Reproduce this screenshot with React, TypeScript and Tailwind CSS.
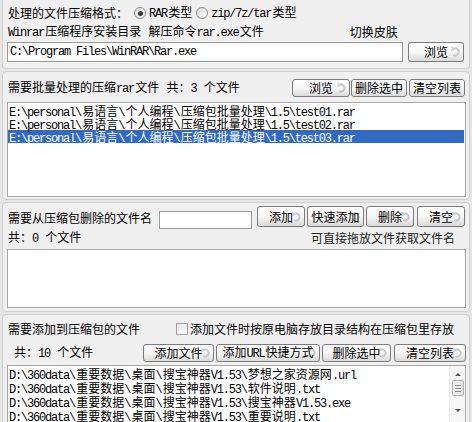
import React from "react";

// split latin runs out so they get the narrow mono look of the original UI font
const T = ({ s }: { s: string }) => (
  <>
    {s
      .split(/([\x20-\x7e]+)/)
      .filter(Boolean)
      .map((p, i) =>
        /^[\x20-\x7e]/.test(p) ? (
          <span key={i} className="font-['Liberation_Mono'] tracking-[-1.2px] pr-[1.2px] whitespace-pre">
            {p}
          </span>
        ) : (
          <span key={i}>{p}</span>
        )
      )}
  </>
);

const Swirl = () => (
  <svg
    className="absolute right-[2px] top-1/2 -translate-y-1/2"
    width="11"
    height="13"
    viewBox="0 0 11 13"
    fill="none"
  >
    <path d="M3 3.5 A3.6 3.6 0 1 1 3.2 9.6" stroke="#c8c8c8" strokeWidth="2" />
    <path d="M1.5 1.5 L4 3.8 L1.2 5" stroke="#d0d0d0" strokeWidth="1.4" />
  </svg>
);

const Btn = ({ label, w }: { label: string; w: string }) => (
  <div
    className={`relative ${w} h-full flex items-center justify-center rounded-[3px] border border-[#7c7c7c] bg-gradient-to-b from-[#ffffff] via-[#f7f7f7] to-[#dadada] text-[12px] leading-none text-black`}
  >
    <span className="relative z-10">
      <T s={label} />
    </span>
    <Swirl />
  </div>
);

const Radio = ({ on }: { on?: boolean }) => (
  <div className="w-[12px] h-[12px] rounded-full border border-[#8c8c8c] bg-gradient-to-br from-[#d8d8d8] to-[#ffffff] flex items-center justify-center">
    {on && <div className="w-[5px] h-[5px] rounded-full bg-[#3a3a3a]" />}
  </div>
);

const Panel = ({ className, children }: { className: string; children: React.ReactNode }) => (
  <div className={`border border-[#cfcfcf] bg-[#f0f0f0] flex flex-col ${className}`}>{children}</div>
);

const rows1 = [
  "E:\\personal\\易语言\\个人编程\\压缩包批量处理\\1.5\\test01.rar",
  "E:\\personal\\易语言\\个人编程\\压缩包批量处理\\1.5\\test02.rar",
  "E:\\personal\\易语言\\个人编程\\压缩包批量处理\\1.5\\test03.rar",
];

const rows4 = [
  "D:\\360data\\重要数据\\桌面\\搜宝神器V1.53\\梦想之家资源网.url",
  "D:\\360data\\重要数据\\桌面\\搜宝神器V1.53\\软件说明.txt",
  "D:\\360data\\重要数据\\桌面\\搜宝神器V1.53\\搜宝神器V1.53.exe",
  "D:\\360data\\重要数据\\桌面\\搜宝神器V1.53\\重要说明.txt",
];

export default function App() {
  return (
    <div className="w-[472px] h-[422px] overflow-hidden bg-[#e6e6e6] px-[2px] flex flex-col gap-[2px] font-['Noto_Sans_CJK_SC',sans-serif] text-[12px] text-black">
      {/* format + rar path */}
      <Panel className="h-[69px] shrink-0 border-t-0 rounded-b-[4px] pl-[5px] pr-[4px]">
        <div className="mt-[5px] h-[16px] flex items-center leading-[14px]">
          <span>处理的文件压缩格式：</span>
          <div className="ml-[6px]">
            <Radio on />
          </div>
          <span className="ml-[3px]">
            <T s="RAR类型" />
          </span>
          <div className="ml-[4px]">
            <Radio />
          </div>
          <span className="ml-[3px]">
            <T s="zip/7z/tar类型" />
          </span>
        </div>
        <div className="mt-[4px] h-[14px] flex items-center leading-[14px]">
          <span>
            <T s="Winrar压缩程序安装目录 解压命令rar.exe文件" />
          </span>
          <span className="ml-[86px]">切换皮肤</span>
        </div>
        <div className="mt-[3px] h-[20px] flex items-center">
          <div className="-ml-[1px] w-[396px] h-[20px] border border-[#9a9a9a] bg-white flex items-center pl-[2px] leading-[14px]">
            <T s="C:\Program Files\WinRAR\Rar.exe" />
          </div>
          <div className="ml-[5px] h-[20px]">
            <Btn label="浏览" w="w-[56px]" />
          </div>
        </div>
      </Panel>

      {/* rar list */}
      <Panel className="h-[129px] shrink-0 rounded-[4px] pl-[4px] pr-[3px]">
        <div className="mt-[7px] h-[18px] flex items-center leading-[14px]">
          <span className="ml-[1px]">
            <T s="需要批量处理的压缩rar文件 共：3 个文件" />
          </span>
          <div className="ml-auto h-full flex mr-[1px]">
            <Btn label="浏览" w="w-[58px]" />
            <div className="ml-[1px] h-full">
              <Btn label="删除选中" w="w-[56px]" />
            </div>
            <div className="ml-[2px] h-full">
              <Btn label="清空列表" w="w-[56px]" />
            </div>
          </div>
        </div>
        <div className="mt-[5px] h-[95px] border border-[#a8a8a8] bg-white pt-[1px] leading-[13px]">
          {rows1.map((r, i) => (
            <div
              key={r}
              className={`h-[13px] pl-[1px] mr-[1px] whitespace-nowrap ${i === 2 ? "bg-[#316ac5] text-white" : ""}`}
            >
              <T s={r} />
            </div>
          ))}
        </div>
      </Panel>

      {/* delete names */}
      <Panel className="h-[110px] shrink-0 rounded-[4px] pl-[4px] pr-[3px]">
        <div className="mt-[3px] h-[23px] flex items-start leading-[14px]">
          <span className="mt-[5px] ml-[1px]">需要从压缩包删除的文件名</span>
          <div className="mt-[5px] ml-[7px] w-[93px] h-[18px] border border-[#9a9a9a] bg-white" />
          <div className="ml-auto h-[21px] flex mr-[1px]">
            <Btn label="添加" w="w-[48px]" />
            <div className="ml-[2px] h-full">
              <Btn label="快速添加" w="w-[57px]" />
            </div>
            <div className="ml-[2px] h-full">
              <Btn label="删除" w="w-[48px]" />
            </div>
            <div className="ml-[3px] h-full">
              <Btn label="清空" w="w-[48px]" />
            </div>
          </div>
        </div>
        <div className="mt-[2px] h-[14px] flex items-center leading-[14px]">
          <span className="ml-[1px]">
            <T s="共：0 个文件" />
          </span>
          <span className="ml-auto mr-[11px] text-[#222]">可直接拖放文件获取文件名</span>
        </div>
        <div className="mt-[4px] h-[59px] border border-[#a8a8a8] bg-white" />
      </Panel>

      {/* files to add */}
      <Panel className="flex-1 rounded-t-[4px] pl-[4px] pr-[3px]">
        <div className="mt-[7px] h-[14px] flex items-center leading-[14px]">
          <span className="ml-[1px]">需要添加到压缩包的文件</span>
          <div className="ml-[36px] w-[12px] h-[12px] border border-[#a4a4a4] bg-gradient-to-br from-[#e4e4e4] to-[#ffffff]" />
          <span className="ml-[2px]">添加文件时按原电脑存放目录结构在压缩包里存放</span>
        </div>
        <div className="mt-[8px] h-[18px] flex items-center leading-[14px]">
          <span className="ml-[7px]">
            <T s="共：10 个文件" />
          </span>
          <div className="ml-auto h-full flex">
            <Btn label="添加文件" w="w-[71px]" />
            <div className="ml-[2px] h-full">
              <Btn label="添加URL快捷方式" w="w-[104px]" />
            </div>
            <div className="ml-[2px] h-full">
              <Btn label="删除选中" w="w-[69px]" />
            </div>
            <div className="ml-[3px] h-full">
              <Btn label="清空列表" w="w-[72px]" />
            </div>
          </div>
        </div>
        <div className="mt-[3px] h-[70px] border border-[#a8a8a8] bg-white flex">
          <div className="flex-1 pt-[1px] leading-[14px]">
            {rows4.map((r) => (
              <div key={r} className="h-[14px] pl-[1px] whitespace-nowrap">
                <T s={r} />
              </div>
            ))}
          </div>
          <div className="w-[16px] bg-[#f7f7f7] border-l border-[#ececec] flex flex-col items-center">
            <div className="mt-[7px] w-0 h-0 border-x-[3px] border-x-transparent border-b-[3px] border-b-[#555]" />
            <div className="mt-[4px] w-[12px] h-[16px] rounded-[2px] border border-[#b4b4b4] bg-gradient-to-r from-[#f2f2f2] to-[#e2e2e2] flex flex-col items-center justify-center gap-[2px]">
              <div className="w-[6px] h-px bg-[#8a8a8a]" />
              <div className="w-[6px] h-px bg-[#8a8a8a]" />
              <div className="w-[6px] h-px bg-[#8a8a8a]" />
            </div>
            <div className="mt-[13px] w-0 h-0 border-x-[3px] border-x-transparent border-t-[3px] border-t-[#555]" />
          </div>
        </div>
      </Panel>
    </div>
  );
}
